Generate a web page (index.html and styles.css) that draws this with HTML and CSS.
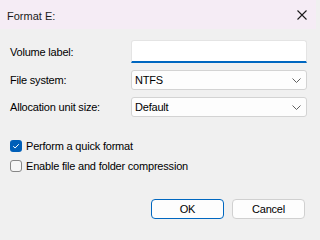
FILE: index.html
```html
<!DOCTYPE html>
<html lang="en">
<head>
<meta charset="utf-8">
<title>Format E:</title>
<link rel="stylesheet" href="styles.css">
</head>
<body>
<div class="window">
  <div class="titlebar">
    <span class="title">Format E:</span>
    <span class="close" aria-label="Close">
      <svg width="10" height="10" viewBox="0 0 10 10"><path d="M0.5 0.5 L9.5 9.5 M9.5 0.5 L0.5 9.5" stroke="#1a1a1a" stroke-width="1.1" fill="none"/></svg>
    </span>
  </div>
  <div class="content">
    <div class="form">
      <label class="label" for="vol">Volume label:</label>
      <div class="input" id="vol"></div>
      <span class="label">File system:</span>
      <div class="select"><span>NTFS</span>
        <svg class="chev" width="9" height="5" viewBox="0 0 9 5"><path d="M0.5 0.5 L4.5 4.5 L8.5 0.5" stroke="#606060" stroke-width="1" fill="none"/></svg>
      </div>
      <span class="label">Allocation unit size:</span>
      <div class="select"><span>Default</span>
        <svg class="chev" width="9" height="5" viewBox="0 0 9 5"><path d="M0.5 0.5 L4.5 4.5 L8.5 0.5" stroke="#606060" stroke-width="1" fill="none"/></svg>
      </div>
    </div>
    <div class="checks">
      <div class="check-row">
        <span class="box checked">
          <svg width="12" height="12" viewBox="0 0 12 12"><path d="M3.2 6.2 L5.1 8 L8.8 4.2" stroke="#ffffff" stroke-width="1" fill="none"/></svg>
        </span>
        <span>Perform a quick format</span>
      </div>
      <div class="check-row">
        <span class="box"></span>
        <span>Enable file and folder compression</span>
      </div>
    </div>
    <div class="buttons">
      <div class="btn primary">OK</div>
      <div class="btn">Cancel</div>
    </div>
  </div>
</div>
</body>
</html>
```
FILE: styles.css
```css
html, body {
  margin: 0;
  padding: 0;
}
body {
  font-family: "Liberation Sans", Arial, sans-serif;
  font-size: 11px;
  letter-spacing: -0.2px;
  color: #000;
  background: #f0f0f0;
}
.window {
  width: 316px;
  height: 233px;
  background: #f0f0f0;
  display: flex;
  flex-direction: column;
  overflow: hidden;
}
.titlebar {
  height: 29px;
  background: #f5ecf5;
  display: flex;
  align-items: center;
  justify-content: space-between;
  padding: 0 9px 0 7px;
  flex-shrink: 0;
}
.title {
  letter-spacing: 0;
  padding-top: 2px;
  color: #1a1a1a;
}
.close {
  display: flex;
  width: 10px;
  height: 10px;
}
.content {
  padding: 11px 9px 0 10px;
  display: flex;
  flex-direction: column;
}
.form {
  display: grid;
  grid-template-columns: 121px 176px;
  grid-template-rows: 23px 20px 20px;
  row-gap: 7px;
  align-items: center;
}
.label {
  color: #000;
}
.input {
  box-sizing: border-box;
  height: 23px;
  background: #ffffff;
  border: 1px solid #e4e4e4;
  border-bottom: 2px solid #0067c0;
  border-radius: 3px 3px 0 0;
}
.select {
  box-sizing: border-box;
  height: 20px;
  background: #fdfdfd;
  border: 1px solid #d3d3d3;
  border-radius: 3px;
  display: flex;
  align-items: center;
  justify-content: space-between;
  padding: 0 5px 0 3px;
}
.chev {
  display: block;
}
.checks {
  margin-top: 19px;
  display: flex;
  flex-direction: column;
}
.check-row {
  height: 20px;
  display: flex;
  align-items: center;
  gap: 4px;
}
.box {
  box-sizing: border-box;
  width: 12px;
  height: 12px;
  border-radius: 3px;
  border: 1px solid #878787;
  background: #f6f6f6;
  display: flex;
}
.box.checked {
  border: none;
  background: #005fb8;
}
.buttons {
  margin-top: 23px;
  display: flex;
  justify-content: flex-end;
  gap: 8px;
  padding-right: 2px;
}
.btn {
  box-sizing: border-box;
  width: 73px;
  height: 20px;
  border: 1px solid #d0d0d0;
  border-radius: 4px;
  background: #fdfdfd;
  display: flex;
  align-items: center;
  justify-content: center;
  color: #000;
}
.btn.primary {
  border-color: #0067c0;
}
```
